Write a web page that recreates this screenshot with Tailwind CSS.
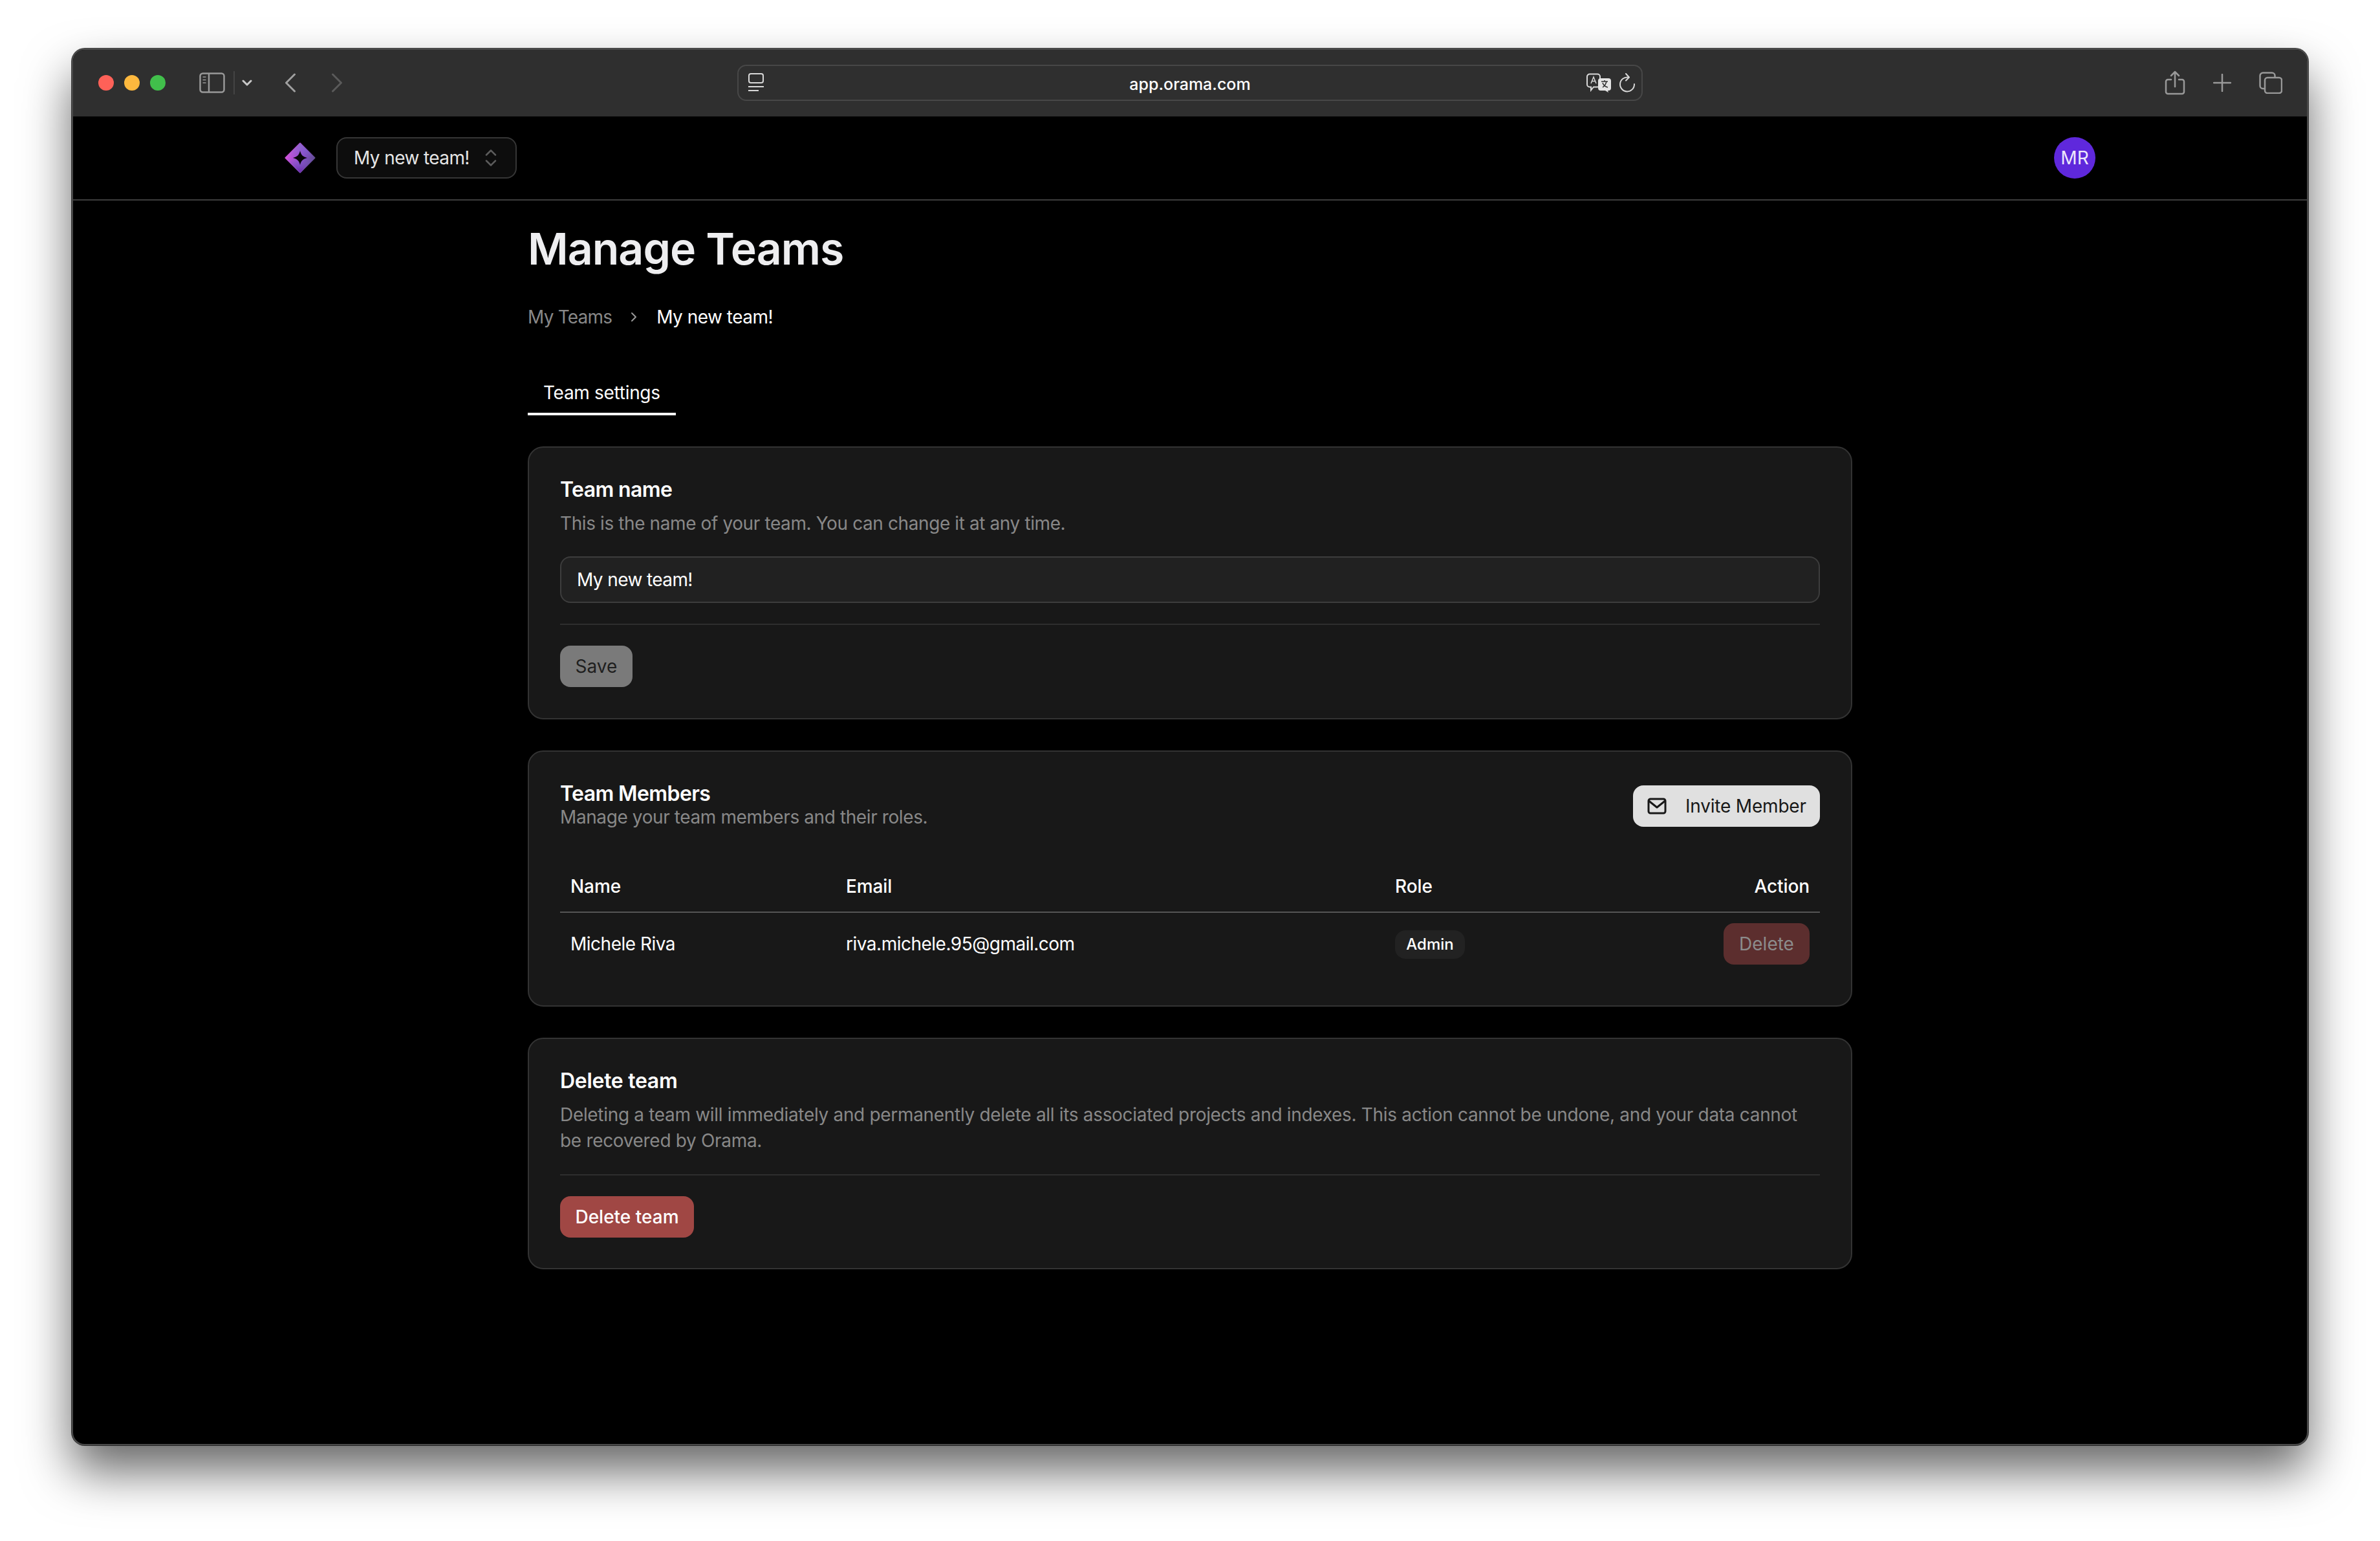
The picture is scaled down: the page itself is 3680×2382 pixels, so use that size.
<!DOCTYPE html>
<html lang="en">

<head>
    <meta charset="UTF-8" />
    <title>Orama - Manage Teams</title>
    <script src="https://cdn.jsdelivr.net/npm/@tailwindcss/browser@4"></script>
</head>

<body class="bg-white h-[2382px] overflow-hidden pt-[75px] pl-[111px] font-['Inter',sans-serif]">
    <!-- Browser window -->
    <div
        class="w-[3458px] h-[2159px] rounded-[20px] overflow-hidden bg-black border-2 border-[#4a4a4a] flex flex-col shadow-[0_40px_75px_rgba(0,0,0,0.6),0_0_0_1px_rgba(0,0,0,0.7)]">
        <!-- Title bar -->
        <div class="h-[104px] shrink-0 bg-[#2f2f2f] grid grid-cols-[1fr_1400px_1fr] items-center -mt-[1px]">
            <div class="flex items-center pl-[39px]">
                <span class="w-6 h-6 rounded-full bg-[#fe6158]"></span>
                <span class="w-6 h-6 rounded-full bg-[#fdb83e] ml-4"></span>
                <span class="w-6 h-6 rounded-full bg-[#41bf4b] ml-4"></span>
                <svg class="ml-[52px]" width="40" height="32" viewBox="0 0 40 32" fill="none" stroke="#999"
                    stroke-width="2.5">
                    <rect x="1.5" y="1.5" width="37" height="29" rx="4" />
                    <path d="M15 2v28" />
                    <path d="M5.5 7h5M5.5 11.500h5M5.500 16h5" stroke-width="1.500" />
                </svg>
                <span class="w-[2px] h-9 bg-[#444] ml-[13px]"></span>
                <svg class="ml-[11px]" width="16" height="12" viewBox="0 0 16 12" fill="none" stroke="#c8c8c8"
                    stroke-width="3" stroke-linecap="round" stroke-linejoin="round">
                    <path d="M2 3l6 6 6-6" />
                </svg>
                <svg class="ml-[50px]" width="18" height="30" viewBox="0 0 18 30" fill="none" stroke="#a0a0a0"
                    stroke-width="3" stroke-linecap="round" stroke-linejoin="round">
                    <path d="M15.500 2L2.500 15l13 13" />
                </svg>
                <svg class="ml-[54px]" width="18" height="30" viewBox="0 0 18 30" fill="none" stroke="#5a5a5a"
                    stroke-width="3" stroke-linecap="round" stroke-linejoin="round">
                    <path d="M2.500 2l13 13-13 13" />
                </svg>
            </div>

            <!-- URL bar -->
            <div
                class="h-[56px] rounded-[14px] border-2 border-[#474747] flex items-center justify-between pl-[15px] pr-[9px] relative">
                <svg width="24" height="30" viewBox="0 0 24 30" fill="none" stroke="#d8d8d8" stroke-width="2">
                    <rect x="1" y="1" width="22" height="14" rx="3" />
                    <path d="M0 21h24" />
                    <path d="M0 27h16" />
                </svg>
                <div class="absolute inset-x-0 top-[10px] text-center text-[25px] font-medium text-white">app.orama.com</div>
                <div class="flex items-center gap-[10px]">
                    <svg width="40" height="30" viewBox="0 0 40 30" fill="none">
                        <path d="M5 1.500h12a4 4 0 0 1 4 4v12a4 4 0 0 1-4 4h-6l-4 5v-5H5a4 4 0 0 1-4-4v-12a4 4 0 0 1 4-4z"
                            stroke="#d8d8d8" stroke-width="2" />
                        <path d="M7 16l4-10 4 10M8.500 12.500h5" stroke="#d8d8d8" stroke-width="1.500" />
                        <path
                            d="M22 8h12a4 4 0 0 1 4 4v11a4 4 0 0 1-4 4h-1l1 3-5-3h-7a4 4 0 0 1-4-4V12a4 4 0 0 1 4-4z"
                            fill="#e4e4e4" />
                        <path d="M23 13h10M28 11v2M25 22c3-2 5-5 6-9M25 15c1 3 4 6 8 7" stroke="#2f2f2f"
                            stroke-width="1.500" />
                    </svg>
                    <svg width="26" height="30" viewBox="0 0 26 30" fill="none" stroke="#d8d8d8" stroke-width="2"
                        stroke-linecap="round" stroke-linejoin="round">
                        <path d="M14.500 6.500A11 11 0 1 0 24 17" />
                        <path d="M11 1l5 5.500-5 5" />
                    </svg>
                </div>
            </div>

            <div class="flex items-center justify-end pr-[38px]">
                <svg width="32" height="38" viewBox="0 0 32 38" fill="none" stroke="#999" stroke-width="2.500"
                    stroke-linecap="round" stroke-linejoin="round">
                    <path d="M10 14H5a3 3 0 0 0-3 3v16a3 3 0 0 0 3 3h22a3 3 0 0 0 3-3V17a3 3 0 0 0-3-3h-5" />
                    <path d="M16 25V2M10 8l6-6 6 6" />
                </svg>
                <svg class="ml-[43px]" width="28" height="28" viewBox="0 0 28 28" fill="none" stroke="#999"
                    stroke-width="2.500" stroke-linecap="round">
                    <path d="M14 1v26M1 14h26" />
                </svg>
                <svg class="ml-[43px]" width="36" height="34" viewBox="0 0 36 34" fill="none" stroke="#999"
                    stroke-width="2.500">
                    <rect x="9" y="9" width="26" height="24" rx="4" />
                    <path d="M9 26H6a4.500 4.500 0 0 1-4.500-4.500V6A4.500 4.500 0 0 1 6 1.500h14A4.500 4.500 0 0 1 24.500 6v3" />
                </svg>
            </div>
        </div>

        <!-- App nav -->
        <div class="h-[130px] shrink-0 border-b-2 border-[#3d3d3d] flex items-center justify-between px-[327px]">
            <div class="flex items-center gap-[32px]">
                <svg width="48" height="48" viewBox="0 0 48 48">
                    <defs>
                        <linearGradient id="logoFill" x1="0" y1="0.300" x2="1" y2="0.700">
                            <stop offset="0" stop-color="#dc52dc" />
                            <stop offset="0.550" stop-color="#8a4ccc" />
                            <stop offset="1" stop-color="#5c4c8a" />
                        </linearGradient>
                        <linearGradient id="logoShade" x1="0.500" y1="0" x2="0.500" y2="1">
                            <stop offset="0" stop-color="#7c74cc" stop-opacity="0.700" />
                            <stop offset="0.500" stop-color="#7c74cc" stop-opacity="0" />
                            <stop offset="1" stop-color="#6a22a8" stop-opacity="0.900" />
                        </linearGradient>
                    </defs>
                    <path d="M24 1.500L46.500 24 24 46.500 1.500 24z" fill="url(#logoFill)" stroke="url(#logoFill)"
                        stroke-width="2" stroke-linejoin="round" />
                    <path d="M24 1.500L46.500 24 24 46.500 1.500 24z" fill="url(#logoShade)" />
                    <path d="M24 13C25.500 19.500 28.500 22.500 35 24 28.500 25.500 25.500 28.500 24 35 22.500 28.500 19.500 25.500 13 24 19.500 22.500 22.500 19.500 24 13Z"
                        fill="#060606" />
                </svg>
                <div
                    class="w-[279px] h-[64px] rounded-[16px] border-2 border-[#363636] bg-[#0d0d0d] flex items-center pl-[25px] text-[28px] tracking-[-0.6px] text-[#e5e5e5]">
                    My new team!
                    <svg class="ml-[24px]" width="18" height="26" viewBox="0 0 18 26" fill="none" stroke="#5c5c5c"
                        stroke-width="2.500" stroke-linecap="round" stroke-linejoin="round">
                        <path d="M2 8.500l7-7 7 7M2 17.500l7 7 7-7" />
                    </svg>
                </div>
            </div>
            <div
                class="w-16 h-16 rounded-full bg-[#5f28dc] flex items-center justify-center text-[28px] text-[#ece6fb]">
                MR</div>
        </div>

        <!-- Main content -->
        <div class="w-[2048px] mx-auto pt-[34px]">
            <h1 class="text-[68px] leading-[80px] font-semibold text-[#eeeef0] tracking-[-1px]">Manage Teams</h1>

            <div class="flex items-center text-[28px] leading-[40px] mt-[46px]">
                <span class="text-[#888] tracking-[-0.8px]">My Teams</span>
                <svg class="ml-[28px]" width="12" height="16" viewBox="0 0 12 16" fill="none" stroke="#999"
                    stroke-width="2" stroke-linecap="round" stroke-linejoin="round">
                    <path d="M3 2l6 6-6 6" />
                </svg>
                <span class="ml-[29px] text-white tracking-[-0.5px]">My new team!</span>
            </div>

            <!-- Tabs -->
            <div class="flex mt-[77px]">
                <div
                    class="w-[229px] pl-6 pb-[11px] text-[28px] leading-[40px] tracking-[-0.3px] whitespace-nowrap text-white border-b-4 border-white">
                    Team settings</div>
            </div>

            <!-- Team name -->
            <div class="mt-[48px] rounded-[24px] border-2 border-[#333] bg-[#181818] p-[48px] h-[422px]">
                <h2 class="text-[32px] leading-[36px] font-semibold tracking-[-0.6px] text-white -mt-[1px]">Team name</h2>
                <p class="text-[28px] leading-[40px] tracking-[-0.4px] text-[#888] mt-[14px]">This is the name of your
                    team. You can change it at any time.</p>
                <input type="text" value="My new team!"
                    class="block w-full h-[72px] mt-[31px] rounded-[16px] border-2 border-[#3d3d3d] bg-[#212121] px-6 text-[28px] tracking-[-0.6px] text-white" />
                <div class="h-[2px] bg-[#2e2e2e] mt-[32px]"></div>
                <button
                    class="mt-[32px] h-[64px] w-[112px] rounded-[16px] bg-[#7a7a7a] text-[28px] text-[#1f1f1f]">Save</button>
            </div>

            <!-- Team members -->
            <div class="mt-[48px] rounded-[24px] border-2 border-[#333] bg-[#181818] p-[48px] h-[396px]">
                <div class="flex items-start justify-between">
                    <div class="-mt-[1px]">
                        <h2 class="text-[32px] leading-[36px] font-semibold tracking-[-0.6px] text-white">Team Members</h2>
                        <p class="text-[28px] leading-[36px] tracking-[-0.4px] text-[#888]">Manage your team members and
                            their roles.</p>
                    </div>
                    <button
                        class="h-[64px] w-[289px] rounded-[16px] bg-[#e0e0e0] flex items-center pl-[22px] text-[28px] tracking-[-0.2px] text-[#181818] mt-[4px]">
                        <svg width="30" height="26" viewBox="0 0 30 26" fill="none" stroke="#181818" stroke-width="3"
                            stroke-linejoin="round" stroke-linecap="round">
                            <rect x="2" y="2" width="26" height="22" rx="3" />
                            <path d="M2.500 5l12.500 10L27.500 5" />
                        </svg>
                        <span class="ml-[29px]">Invite Member</span>
                    </button>
                </div>

                <div
                    class="grid grid-cols-[426px_849px_1fr_auto] px-4 mt-[50px] h-[80px] items-center text-[28px] tracking-[-0.1px] text-white font-medium border-b-2 border-[#555]">
                    <div>Name</div>
                    <div>Email</div>
                    <div>Role</div>
                    <div class="text-right">Action</div>
                </div>
                <div
                    class="grid grid-cols-[426px_849px_1fr_auto] px-4 h-[80px] mt-[8px] items-center text-[28px] text-white">
                    <div class="tracking-[-0.5px]">Michele Riva</div>
                    <div class="tracking-[-0.5px]">riva.michele.95@gmail.com</div>
                    <div>
                        <span
                            class="inline-flex items-center justify-center h-[44px] w-[108px] rounded-[16px] bg-[#222] text-[24px] font-medium">Admin</span>
                    </div>
                    <button
                        class="h-[64px] w-[133px] rounded-[16px] bg-[#5c2e2e] text-[28px] text-[#8c8c8c]">Delete</button>
                </div>
            </div>

            <!-- Delete team -->
            <div class="mt-[48px] rounded-[24px] border-2 border-[#333] bg-[#181818] p-[48px] h-[358px]">
                <h2 class="text-[32px] leading-[36px] font-semibold tracking-[-0.3px] text-white -mt-[1px]">Delete team
                </h2>
                <p class="max-w-[1930px] text-[28px] leading-[40px] tracking-[-0.32px] text-[#888] mt-[14px]">Deleting a
                    team will immediately and permanently delete all its associated projects and indexes. This action
                    cannot be undone, and your data cannot be recovered by Orama.</p>
                <div class="h-[2px] bg-[#2e2e2e] mt-[32px]"></div>
                <button
                    class="mt-[32px] h-[64px] w-[207px] rounded-[16px] bg-[#a04744] text-[28px] text-white font-medium">Delete
                    team</button>
            </div>
        </div>
    </div>
</body>

</html>
